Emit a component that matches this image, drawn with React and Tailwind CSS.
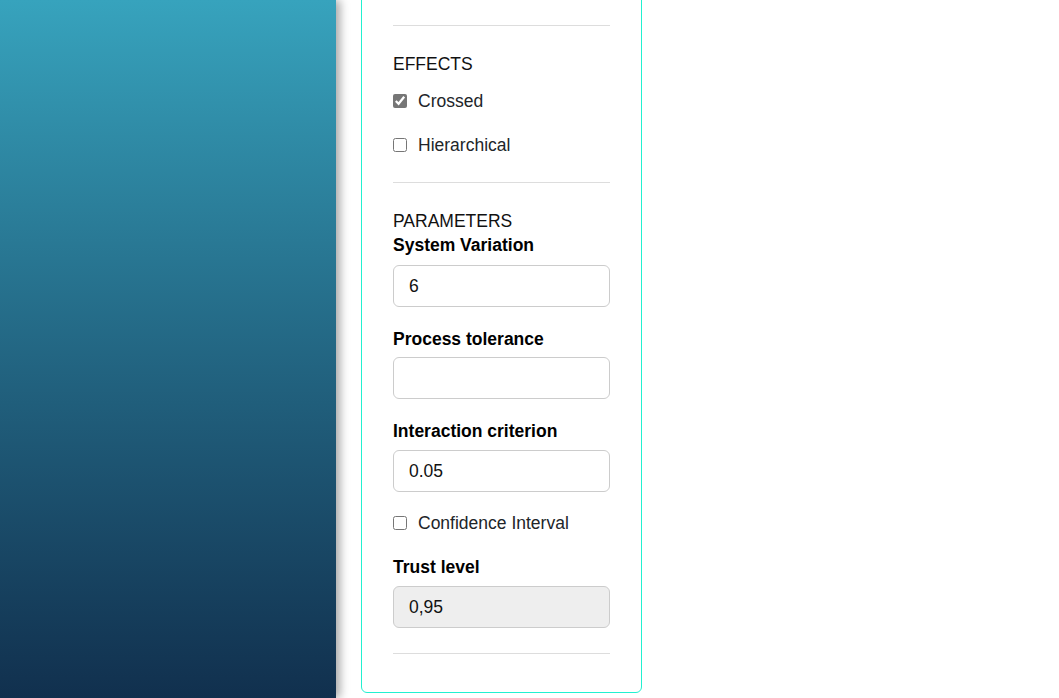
export default function App() {
    const Field = ({ label, value, disabled, gap = 'mt-2' }) => (
        <div>
            <label className="block font-bold leading-6 text-black">{label}</label>
            <input
                type="text"
                defaultValue={value}
                disabled={disabled}
                className={
                    gap +
                    ' block h-[42px] w-full rounded-md border border-[#cccccc] px-[15px] text-[17.5px] text-[#111111] outline-none ' +
                    (disabled ? 'bg-[#eeeeee]' : 'bg-white')
                }
            />
        </div>
    );

    const Check = ({ label, checked }) => (
        <label className="flex h-6 items-center leading-6 text-[#212529]">
            <input
                type="checkbox"
                defaultChecked={checked}
                className="m-0 mr-[11px] h-[14px] w-[14px] accent-[#767676]"
            />
            {label}
        </label>
    );

    return (
        <div
            className="flex h-screen overflow-hidden bg-white text-[17.5px]"
            style={{ fontFamily: '"Liberation Sans", Arial, sans-serif' }}
        >
            <aside className="relative z-10 h-full w-[336px] shrink-0 bg-gradient-to-b from-[#37a3bd] to-[#11304e] shadow-[4px_0_9px_rgba(0,0,0,0.35)]" />
            <main className="pl-[25px]">
                <div className="-mt-[20px] w-[281px] rounded-md border border-[#22f0d0] px-[31px] pt-[44px] pb-[38px]">
                    <hr className="border-[#dddddd]" />
                    <div className="mt-[26px] leading-6 text-[#111111]">EFFECTS</div>
                    <div className="mt-[13px]">
                        <Check label="Crossed" checked />
                    </div>
                    <div className="mt-[20px]">
                        <Check label="Hierarchical" />
                    </div>
                    <hr className="mt-[25px] border-[#dddddd]" />
                    <div className="mt-[26px] leading-6 text-[#111111]">PARAMETERS</div>
                    <Field label="System Variation" value="6" />
                    <div className="mt-[20px]">
                        <Field label="Process tolerance" value="" gap="mt-[6px]" />
                    </div>
                    <div className="mt-[20px]">
                        <Field label="Interaction criterion" value="0.05" gap="mt-[7px]" />
                    </div>
                    <div className="mt-[19px]">
                        <Check label="Confidence Interval" />
                    </div>
                    <div className="mt-[20px]">
                        <Field label="Trust level" value="0,95" disabled gap="mt-[7px]" />
                    </div>
                    <hr className="mt-[25px] border-[#dddddd]" />
                </div>
            </main>
        </div>
    );
}
